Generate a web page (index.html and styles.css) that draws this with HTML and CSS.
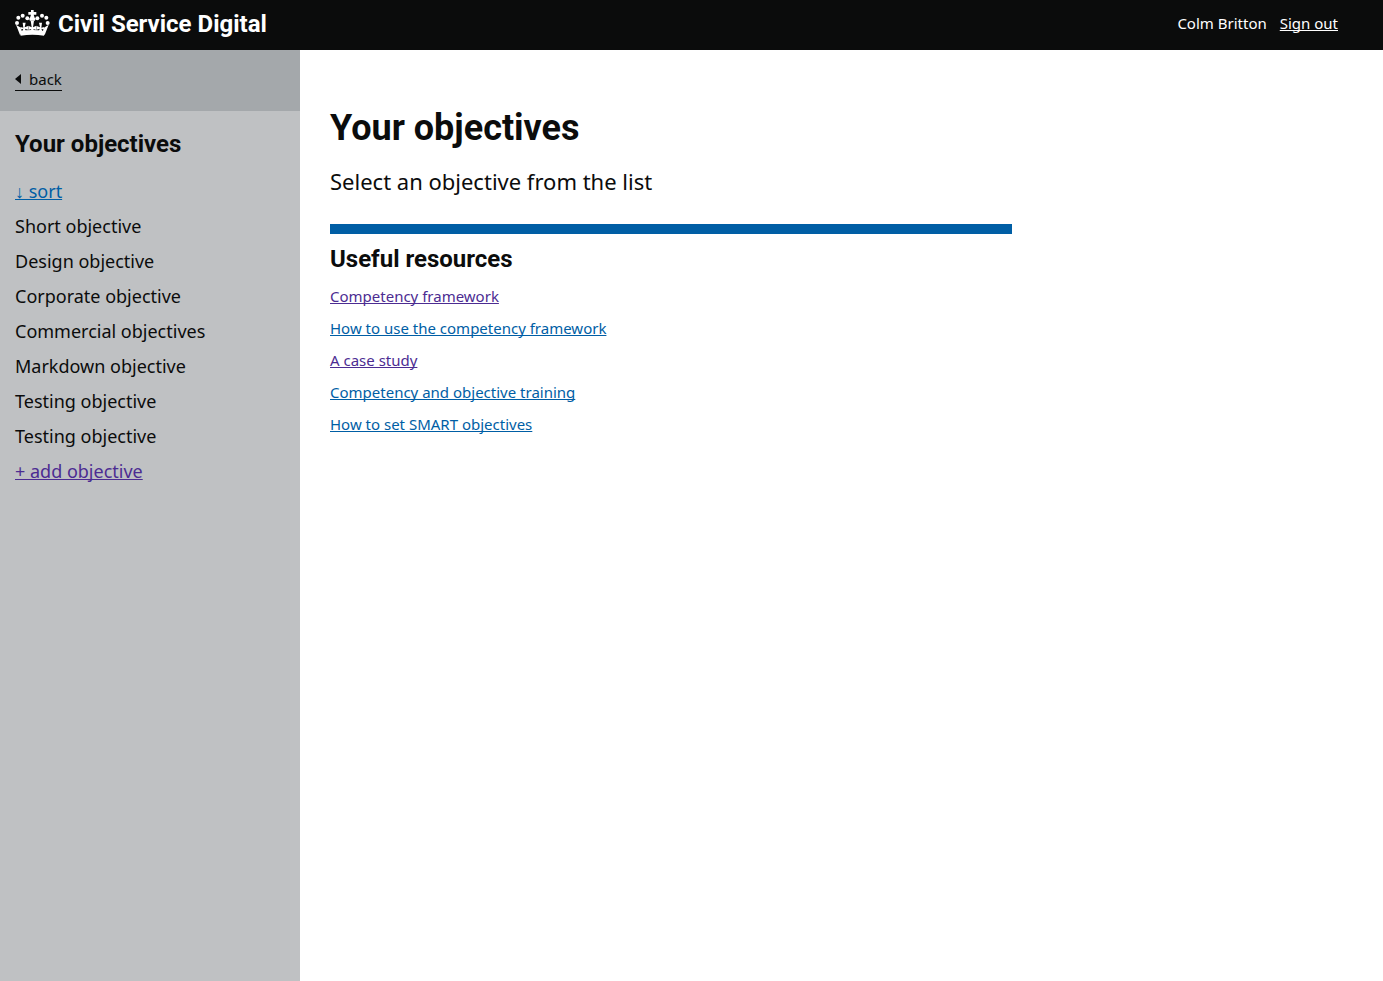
FILE: index.html
```html
<!DOCTYPE html>
<html lang="en">
<head>
<meta charset="utf-8">
<meta name="viewport" content="width=device-width, initial-scale=1">
<title>Your objectives - Civil Service Digital</title>
<link rel="stylesheet" href="styles.css">
</head>
<body>
<header class="site-header">
  <a class="brand" href="#">
    <svg class="crown" viewBox="0 0 105 81" fill="currentColor" aria-hidden="true">
      <path d="M48 0h8v6h8v8h-8l3 9c3 3 3 6 0 9h-14c-3-3-3-6 0-9l3-9h-8V6h8z"/>
      <circle cx="37" cy="25" r="6"/><circle cx="23" cy="17" r="6"/><circle cx="10" cy="23" r="6"/><circle cx="6" cy="39" r="6"/>
      <circle cx="67" cy="25" r="6"/><circle cx="81" cy="17" r="6"/><circle cx="94" cy="23" r="6"/><circle cx="98" cy="39" r="6"/>
      <path d="M14 64c25-5 51-5 76 0l-3 13c-23-4-47-4-70 0z"/>
      <path d="M3 44l12 8 7 14-7 9zM101 44l-12 8-7 14 7 9z"/>
      <path d="M47 32h10l-3 20 10-5v13l-9-3 4 9H45l4-9-9 3V47l10 5zM23 38h9l-3 14 10-4v11l-9-3 3 9H21l4-9-9 3v-8l9 2zM81 38h-9l3 14-10-4v11l9-3-3 9h12l-4-9 9 3v-8l-9 2z"/>
    </svg>
    <span>Civil Service Digital</span>
  </a>
  <div class="account">
    <span>Colm Britton</span>
    <a href="#">Sign out</a>
  </div>
</header>
<div class="layout">
  <aside class="sidebar">
    <div class="back-bar"><a class="back" href="#">back</a></div>
    <nav class="objectives" aria-labelledby="objectives-title">
      <h2 class="heading" id="objectives-title">Your objectives</h2>
      <ul class="objective-list">
        <li><a class="link" href="#">↓ sort</a></li>
        <li><a href="#">Short objective</a></li>
        <li><a href="#">Design objective</a></li>
        <li><a href="#">Corporate objective</a></li>
        <li><a href="#">Commercial objectives</a></li>
        <li><a href="#">Markdown objective</a></li>
        <li><a href="#">Testing objective</a></li>
        <li><a href="#">Testing objective</a></li>
        <li><a class="link seen" href="#">+ add objective</a></li>
      </ul>
    </nav>
  </aside>
  <main class="content">
    <h1 class="title">Your objectives</h1>
    <p class="lede">Select an objective from the list</p>
    <section class="resources">
      <h2 class="heading">Useful resources</h2>
      <ul class="resource-list">
        <li><a class="link seen" href="#">Competency framework</a></li>
        <li><a class="link" href="#">How to use the competency framework</a></li>
        <li><a class="link seen" href="#">A case study</a></li>
        <li><a class="link" href="#">Competency and objective training</a></li>
        <li><a class="link" href="#">How to set SMART objectives</a></li>
      </ul>
    </section>
  </main>
</div>
</body>
</html>
```
FILE: styles.css
```css
* { box-sizing: border-box; }
body {
  margin: 0;
  min-height: 100vh;
  display: flex;
  flex-direction: column;
  background: #fff;
  color: #0b0c0c;
  font-family: "Noto Sans", Arial, sans-serif;
  font-size: 15px;
  line-height: 20px;
}
h1, h2, p, ul { margin: 0; padding: 0; }
ul { list-style: none; }
a { color: inherit; text-decoration: none; text-decoration-skip-ink: none; }

.site-header {
  display: flex;
  justify-content: space-between;
  align-items: center;
  height: 50px;
  padding: 0 45px 2px 15px;
  background: #0b0c0c;
  color: #fff;
}
.brand {
  display: flex;
  align-items: center;
  gap: 8px;
  font: bold 24px/30px Roboto, Arial, sans-serif;
}
.crown { width: 35px; height: 27px; margin-bottom: 2px; }
.account { display: flex; gap: 13px; padding-bottom: 2px; }
.account a { text-decoration: underline; }

.layout { flex: 1; display: flex; }
.sidebar { flex: 0 0 300px; background: #bfc1c3; }
.back-bar { display: flex; padding: 18px 15px 20px; background: #a4a8ab; }
.back {
  display: inline-flex;
  align-items: center;
  gap: 8px;
  height: 23px;
  border-bottom: 1px solid #0b0c0c;
  line-height: 18px;
}
.back::before {
  content: "";
  border: solid transparent;
  border-width: 5px 6px 5px 0;
  border-right-color: #0b0c0c;
}
.objectives { padding: 18px 15px; }
.heading { font: bold 24px/30px Roboto, Arial, sans-serif; }
.objective-list {
  display: grid;
  gap: 10px;
  margin-top: 20px;
  font-size: 18px;
  line-height: 25px;
}
.link { color: #005ea5; text-decoration: underline; }
.seen { color: #4c2c92; }

.content { flex: 1; padding: 58px 30px 30px; }
.title { font: bold 36px/40px Roboto, Arial, sans-serif; }
.lede { margin-top: 18px; font-size: 22px; line-height: 30px; }
.resources {
  width: 66.6667%;
  margin-top: 28px;
  padding-top: 10px;
  border-top: 10px solid #005ea5;
}
.resource-list { display: grid; gap: 12px; margin-top: 12px; }
```
